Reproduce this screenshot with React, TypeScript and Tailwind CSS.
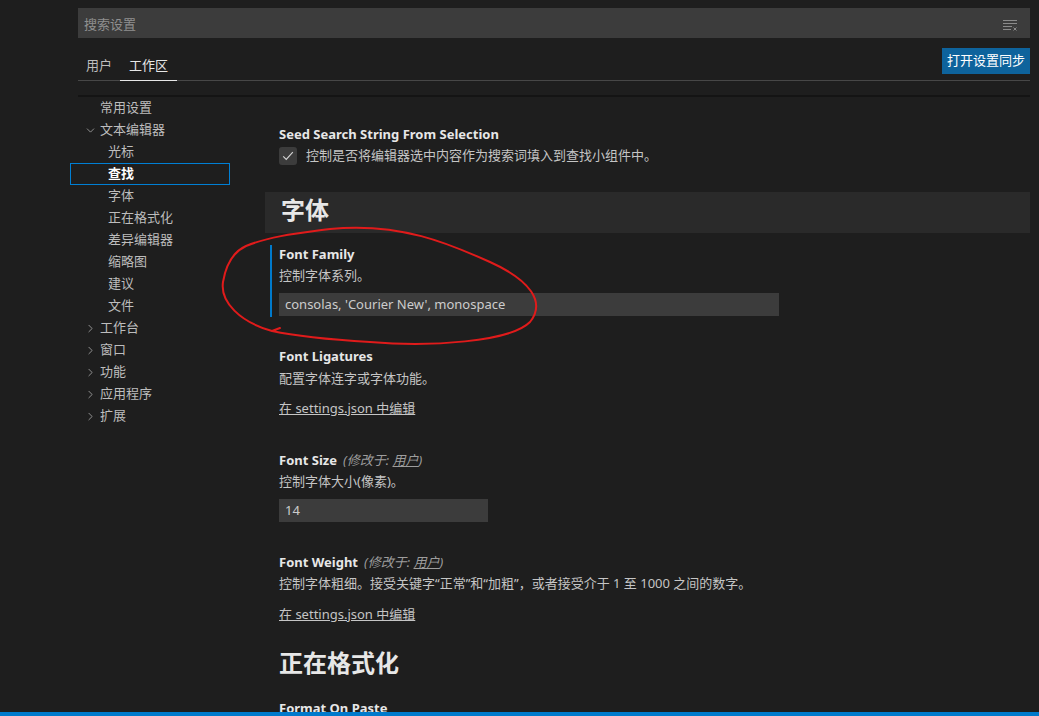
import React from "react";
import { ChevronDown, ChevronRight } from "lucide-react";

const font = "font-['Noto_Sans','Noto_Sans_CJK_SC',sans-serif]";

type TocItem = { label: string; level: 0 | 1; chevron?: "down" | "right"; selected?: boolean };

const toc: TocItem[] = [
  { label: "常用设置", level: 0 },
  { label: "文本编辑器", level: 0, chevron: "down" },
  { label: "光标", level: 1 },
  { label: "查找", level: 1, selected: true },
  { label: "字体", level: 1 },
  { label: "正在格式化", level: 1 },
  { label: "差异编辑器", level: 1 },
  { label: "缩略图", level: 1 },
  { label: "建议", level: 1 },
  { label: "文件", level: 1 },
  { label: "工作台", level: 0, chevron: "right" },
  { label: "窗口", level: 0, chevron: "right" },
  { label: "功能", level: 0, chevron: "right" },
  { label: "应用程序", level: 0, chevron: "right" },
  { label: "扩展", level: 0, chevron: "right" },
];

const ClearIcon = () => (
  <svg width="16" height="14" viewBox="0 0 16 14" fill="none" stroke="#8b8b8b" strokeWidth="1">
    <path d="M1 2.5h14M1 5.5h14M1 8.5h9M1 11.5h8" />
    <path d="M11.5 9.5l3 3M14.5 9.5l-3 3" />
  </svg>
);

const Title = ({ children, modified }: { children: React.ReactNode; modified?: boolean }) => (
  <div className="h-[18px] leading-[18px] text-[13px] font-bold text-[#e7e7e7] flex items-center">
    {children}
    {modified && (
      <span className="ml-[6px] font-normal italic text-[#9d9d9d]">
        (修改于: <span className="underline">用户</span>)
      </span>
    )}
  </div>
);

const Desc = ({ children, className = "" }: { children: React.ReactNode; className?: string }) => (
  <div className={`h-[18px] leading-[18px] text-[13px] text-[#c5c5c5] ${className}`}>{children}</div>
);

const EditLink = ({ className = "" }: { className?: string }) => (
  <div className={`h-[18px] leading-[18px] text-[13px] text-[#c5c5c5] underline ${className}`}>
    在 settings.json 中编辑
  </div>
);

const Toc = () => (
  <div className="w-[160px] shrink-0">
    {toc.map((item) => (
      <div
        key={item.label}
        className={`h-[22px] flex items-center text-[13px] ${
          item.selected ? "border border-[#007fd4] font-bold text-white" : "border border-transparent text-[#bdbdbd]"
        }`}
      >
        <div className={`${item.level === 0 ? "w-[13px] ml-[13px]" : "w-[37px]"} shrink-0 flex items-center`}>
          {item.chevron === "down" && <ChevronDown size={13} strokeWidth={1.3} color="#bdbdbd" />}
          {item.chevron === "right" && <ChevronRight size={13} strokeWidth={1.3} color="#bdbdbd" />}
        </div>
        <span className={item.level === 0 ? "ml-[3px]" : ""}>{item.label}</span>
      </div>
    ))}
  </div>
);

const Content = () => (
  <div className="flex-1 ml-[35px] pt-[28px]">
    <div className="pl-[14px]">
      <Title>Seed Search String From Selection</Title>
      <div className="mt-[4px] flex items-center h-[18px]">
        <div className="w-[18px] h-[18px] bg-[#3c3c3c] rounded-[3px] flex items-center justify-center">
          <svg width="14" height="14" viewBox="0 0 16 16" fill="none" stroke="#d4d4d4" strokeWidth="1.3">
            <path d="M2.5 8.5l3.5 3.5 7.5-8.5" />
          </svg>
        </div>
        <span className="ml-[9px] text-[13px] text-[#c5c5c5]">控制是否将编辑器选中内容作为搜索词填入到查找小组件中。</span>
      </div>
    </div>

    <div className="mt-[27px] h-[41px] bg-[#2a2a2a] flex items-center pl-[16px] pb-[5px]">
      <span className="text-[24px] font-bold text-[#e7e7e7]">字体</span>
    </div>

    <div className="mt-[12px] ml-[5px] pl-[7px] border-l-2 border-[#007acc] pb-[1px]">
      <Title>Font Family</Title>
      <Desc className="mt-[3px]">控制字体系列。</Desc>
      <div className="mt-[9px] w-[500px] h-[23px] bg-[#3c3c3c] flex items-center pl-[6px] text-[13px] text-[#cccccc]">
        consolas, 'Courier New', monospace
      </div>
    </div>

    <div className="pl-[14px]">
      <div className="mt-[30px]">
        <Title>Font Ligatures</Title>
        <Desc className="mt-[4px]">配置字体连字或字体功能。</Desc>
        <EditLink className="mt-[12px]" />
      </div>

      <div className="mt-[34px]">
        <Title modified>Font Size</Title>
        <Desc className="mt-[3px]">控制字体大小(像素)。</Desc>
        <div className="mt-[9px] w-[209px] h-[23px] bg-[#3c3c3c] flex items-center pl-[6px] text-[13px] text-[#cccccc]">
          14
        </div>
      </div>

      <div className="mt-[31px]">
        <Title modified>Font Weight</Title>
        <Desc className="mt-[3px]">控制字体粗细。接受关键字“正常”和“加粗”，或者接受介于 1 至 1000 之间的数字。</Desc>
        <EditLink className="mt-[13px]" />
      </div>

      <div className="mt-[24px] h-[32px] leading-[32px] text-[24px] font-bold text-[#e7e7e7]">正在格式化</div>
      <div className="mt-[20px]">
        <Title>Format On Paste</Title>
      </div>
    </div>
  </div>
);

export default function App() {
  return (
    <div className={`relative w-[1039px] h-[716px] bg-[#1e1e1e] flex flex-col overflow-hidden ${font}`}>
      <div className="flex-1 overflow-hidden pl-[70px] pr-[9px]">
        <div className="ml-[8px] pt-[8px]">
          <div className="h-[30px] bg-[#3c3c3c] flex items-center justify-between pl-[6px] pr-[12px] pt-[3px]">
            <span className="text-[13px] text-[#8f8f8f]">搜索设置</span>
            <ClearIcon />
          </div>
          <div className="mt-[10px] h-[33px] flex items-start justify-between border-b border-[#474747]">
            <div className="flex h-full text-[13px]">
              <div className="px-[8px] h-full flex items-center pt-[3px] text-[#bdbdbd]">用户</div>
              <div className="px-[9px] h-[33px] -mb-px flex items-center pt-[3px] text-[#e7e7e7] border-b border-[#e7e7e7]">
                工作区
              </div>
            </div>
            <div className="h-[26px] px-[5px] bg-[#0e639c] text-white text-[13px] flex items-center">打开设置同步</div>
          </div>
          <div className="mt-[14px] h-[2px] bg-[#141414]" />
        </div>
        <div className="flex">
          <Toc />
          <Content />
        </div>
      </div>
      <div className="h-[4px] bg-[#007acc] shrink-0" />
      <svg className="absolute left-0 top-0 pointer-events-none" width="1039" height="716" fill="none">
        <path
          d="M246 246 C 270 236, 300 233, 330 229 C 400 222, 450 244, 490 262 C 530 280, 546 302, 530 322 C 510 342, 430 347, 370 342 C 320 339, 295 336, 272 331 C 240 322, 220 302, 223 282 C 226 264, 233 252, 246 246 M 272 331 L 280 328"
          stroke="#e01b1b"
          strokeWidth="2"
          strokeLinecap="round"
        />
      </svg>
    </div>
  );
}
